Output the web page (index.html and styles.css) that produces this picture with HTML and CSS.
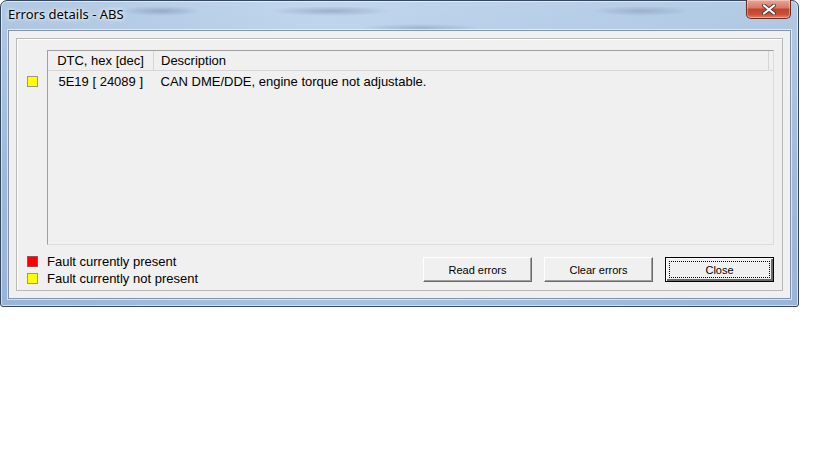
FILE: index.html
```html
<!DOCTYPE html>
<html lang="en">
<head>
  <meta charset="UTF-8">
  <title>Errors details - ABS</title>
  <link rel="stylesheet" href="styles.css">
</head>
<body>
  <div class="window">
    <div class="titlebar">
      <span class="title">Errors details - ABS</span>
      <button class="close-btn" title="Close">
        <svg width="16" height="11" viewBox="0 0 16 11">
          <path d="M3 1.5 L13 9.5 M13 1.5 L3 9.5" stroke="#5a3a35" stroke-width="4" stroke-linecap="round"/>
          <path d="M3 1.5 L13 9.5 M13 1.5 L3 9.5" stroke="#ffffff" stroke-width="2.2" stroke-linecap="round"/>
        </svg>
      </button>
    </div>

    <div class="client">
      <div class="panel">
        <div class="main">
          <div class="markers">
            <span class="marker yellow"></span>
          </div>
          <div class="listbox">
            <table class="list">
              <thead>
                <tr>
                  <th class="col-code">DTC, hex [dec]</th>
                  <th class="col-desc">Description</th>
                  <th class="col-rest"></th>
                </tr>
              </thead>
              <tbody>
                <tr>
                  <td class="col-code">5E19 [ 24089 ]</td>
                  <td class="col-desc">CAN DME/DDE, engine torque not adjustable.</td>
                  <td></td>
                </tr>
              </tbody>
            </table>
          </div>
        </div>

        <div class="footer">
          <div class="legend">
            <div class="legend-item"><span class="marker red"></span>Fault currently present</div>
            <div class="legend-item"><span class="marker yellow"></span>Fault currently not present</div>
          </div>
          <div class="buttons">
            <button class="btn">Read errors</button>
            <button class="btn">Clear errors</button>
            <button class="btn btn-default"><span class="focus">Close</span></button>
          </div>
        </div>
      </div>
    </div>
  </div>
</body>
</html>
```

FILE: styles.css
```css
body {
  margin: 0;
  background: #ffffff;
  font-family: "Liberation Sans", Arial, sans-serif;
  font-size: 12px;
  color: #000;
}

.window {
  width: 797px;
  height: 305px;
  border: 1px solid #34475e;
  border-radius: 7px 7px 3px 3px;
  background:
    radial-gradient(ellipse 40px 5px at 160px 10px, rgba(70,90,120,0.3), transparent),
    radial-gradient(ellipse 60px 5px at 330px 10px, rgba(70,90,120,0.3), transparent),
    radial-gradient(ellipse 50px 5px at 640px 10px, rgba(70,90,120,0.25), transparent),
    radial-gradient(ellipse 60px 4px at 420px 27px, rgba(70,90,120,0.25), transparent),
    linear-gradient(90deg, rgba(120,140,170,0.15), rgba(255,255,255,0.1) 40%, rgba(120,140,170,0.12)),
    linear-gradient(#bad2ec, #a4c0e0 60%, #9fbbe0);
  display: flex;
  flex-direction: column;
  box-shadow: inset 0 0 0 1px rgba(255,255,255,0.55);
}

.titlebar {
  height: 29px;
  display: flex;
  justify-content: space-between;
  align-items: flex-start;
}

.title {
  font-family: "Noto Sans", "Open Sans", sans-serif;
  font-size: 13px;
  padding: 4px 0 0 7px;
  text-shadow: 0 0 6px #fff, 0 0 3px #fff;
}

.close-btn {
  width: 45px;
  height: 19px;
  margin: -1px 7px 0 0;
  padding: 0;
  border: 1px solid #6a2c22;
  border-top: none;
  border-radius: 0 0 5px 5px;
  background: linear-gradient(#e7a797 0%, #d77764 45%, #c0432a 50%, #cb5038 80%, #e2836c 100%);
  box-shadow: inset 0 0 0 1px rgba(255,255,255,0.35);
  display: flex;
  justify-content: center;
  align-items: center;
}

.client {
  flex: 1;
  margin: 0 7px 7px 7px;
  background: #f0f0f0;
  border: 1px solid #7f93ab;
  box-shadow: 0 0 0 1px rgba(255,255,255,0.6);
  padding: 7px;
}

.panel {
  height: 100%;
  box-sizing: border-box;
  border: 1px solid #b9b9b9;
  box-shadow: inset 1px 1px 0 #fff;
  padding: 11px 8px 0 10px;
}

.main {
  display: flex;
}

.markers {
  width: 20px;
  padding-top: 26px;
}

.marker {
  display: inline-block;
  width: 9px;
  height: 9px;
  border: 1px solid #9a9a7a;
}

.marker.yellow {
  background: #ffff00;
}

.marker.red {
  background: #ff0000;
  border-color: #a05050;
}

.listbox {
  flex: 1;
  height: 195px;
  box-sizing: border-box;
  border: 1px solid #a0a0a0;
  border-right-color: #dcdcdc;
  border-bottom-color: #dcdcdc;
  background: #f0f0f0;
}

.list {
  width: 100%;
  border-collapse: collapse;
  font-size: 13px;
}

.list th {
  font-weight: normal;
  height: 19px;
  padding: 0;
  border-bottom: 1px solid #d5d5d5;
  border-right: 1px solid #d5d5d5;
  text-align: left;
}

.list th.col-rest {
  width: 4px;
  border-right: none;
}

.list td {
  height: 20px;
  padding: 0;
}

.col-code {
  width: 105px;
  text-align: center !important;
}

.col-desc {
  padding-left: 7px !important;
}

.footer {
  display: flex;
  justify-content: space-between;
  margin-top: 8px;
}

.legend-item {
  display: flex;
  align-items: center;
  gap: 9px;
  height: 17px;
  font-size: 13px;
}

.buttons {
  display: flex;
  gap: 12px;
  margin-top: 4px;
}

.btn {
  width: 109px;
  height: 25px;
  font-family: "Liberation Sans", Arial, sans-serif;
  font-size: 11px;
  background: #f0f0f0;
  border: 1px solid;
  border-color: #fff #696969 #696969 #fff;
  box-shadow: inset -1px -1px 0 #a0a0a0;
  padding: 0;
}

.btn-default {
  border: 1px solid #000;
  box-shadow: inset 1px 1px 0 #fff, inset -2px -2px 0 #696969, inset -1px -1px 0 #696969;
  padding: 3px;
}

.btn-default .focus {
  display: flex;
  height: 100%;
  box-sizing: border-box;
  justify-content: center;
  align-items: center;
  border: 1px dotted #000;
}
```
